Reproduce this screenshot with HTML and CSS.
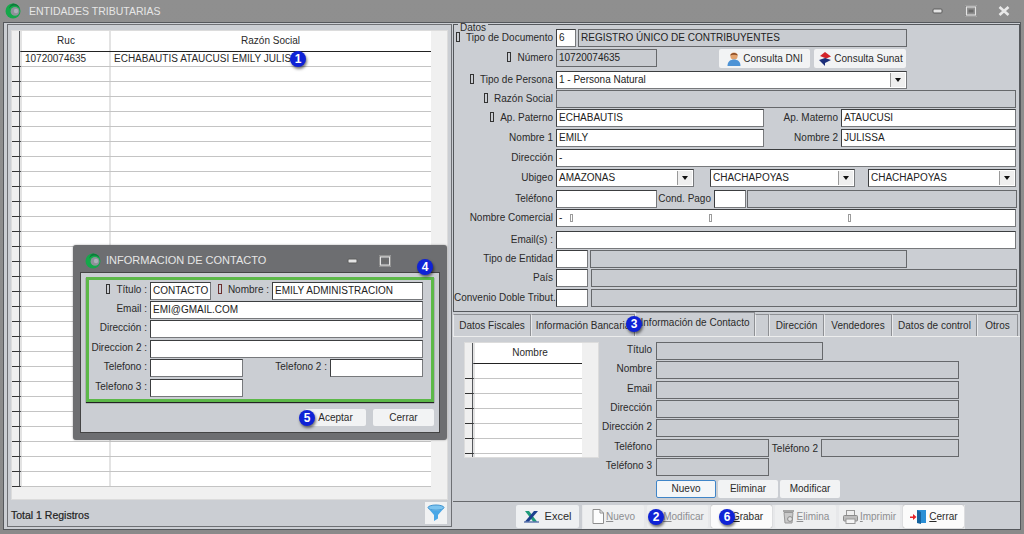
FILE: index.html
```html
<!DOCTYPE html>
<html lang="es">
<head>
<meta charset="utf-8">
<title>Entidades Tributarias</title>
<link rel="stylesheet" href="styles.css">
</head>
<body>
<svg class="defs" width="0" height="0" aria-hidden="true">
  <symbol id="logo" viewBox="0 0 16 16">
    <circle cx="8" cy="8" r="7.5" fill="#14a84a"/>
    <path d="M8 .5A7.5 7.5 0 0 1 15 6 6 6 0 0 0 4 6 7 7 0 0 1 8 .5z" fill="#0c7a3a"/>
    <circle cx="10" cy="8.4" r="4.4" fill="#8d9299"/>
    <circle cx="11" cy="8" r="2.2" fill="#aab0b8"/>
  </symbol>
  <symbol id="min" viewBox="0 0 12 12"><rect x="1" y="4" width="9" height="4" rx="1" fill="#e4e4e4" stroke="#5c5c5c"/></symbol>
  <symbol id="max" viewBox="0 0 12 12"><rect x="1" y="1.5" width="10" height="9" fill="none" stroke="#e4e4e4" stroke-width="2"/><rect x="0.5" y="1" width="11" height="10" fill="none" stroke="#5c5c5c" stroke-width=".6"/><rect x="3.5" y="4.5" width="5" height="3" fill="#6a6a6a"/></symbol>
  <symbol id="close" viewBox="0 0 12 12"><path d="M1.5 2 10.5 10M10.5 2 1.5 10" stroke="#e8e8e8" stroke-width="2.6" fill="none"/></symbol>
</svg>

<div class="window">
  <header class="titlebar">
    <svg class="logo"><use href="#logo"/></svg>
    <span class="title-text">ENTIDADES TRIBUTARIAS</span>
    <div class="controls">
      <svg class="ctl"><use href="#min"/></svg>
      <svg class="ctl"><use href="#max"/></svg>
      <svg class="ctl"><use href="#close"/></svg>
    </div>
  </header>

  <div class="client">
    <section class="list-panel">
      <div class="grid grid-main">
        <div class="grow ghead"><i></i><b>Ruc</b><b>Razón Social</b></div>
        <div class="grow"><i></i><b class="left">10720074635</b><b class="left">ECHABAUTIS ATAUCUSI EMILY JULISSA</b></div>
        <div class="grow"><i></i><b></b><b></b></div><div class="grow"><i></i><b></b><b></b></div><div class="grow"><i></i><b></b><b></b></div>
        <div class="grow"><i></i><b></b><b></b></div><div class="grow"><i></i><b></b><b></b></div><div class="grow"><i></i><b></b><b></b></div>
        <div class="grow"><i></i><b></b><b></b></div><div class="grow"><i></i><b></b><b></b></div><div class="grow"><i></i><b></b><b></b></div>
        <div class="grow"><i></i><b></b><b></b></div><div class="grow"><i></i><b></b><b></b></div><div class="grow"><i></i><b></b><b></b></div>
        <div class="grow"><i></i><b></b><b></b></div><div class="grow"><i></i><b></b><b></b></div><div class="grow"><i></i><b></b><b></b></div>
        <div class="grow"><i></i><b></b><b></b></div><div class="grow"><i></i><b></b><b></b></div><div class="grow"><i></i><b></b><b></b></div>
        <div class="grow"><i></i><b></b><b></b></div><div class="grow"><i></i><b></b><b></b></div><div class="grow"><i></i><b></b><b></b></div>
        <div class="grow"><i></i><b></b><b></b></div><div class="grow"><i></i><b></b><b></b></div><div class="grow"><i></i><b></b><b></b></div>
        <div class="grow"><i></i><b></b><b></b></div><div class="grow"><i></i><b></b><b></b></div><div class="grow"><i></i><b></b><b></b></div>
        <div class="grow"><i></i><b></b><b></b></div>
      </div>
      <div class="list-foot">
        <span class="total">Total 1 Registros</span>
        <button class="filter" aria-label="Filtro">
          <svg width="18" height="18" viewBox="0 0 18 18"><ellipse cx="9" cy="3.6" rx="8" ry="2.6" fill="#7cc4f0" stroke="#3f93cf"/><path d="M1.4 4.5 7 11v6l4-2.4V11l5.6-6.5C13 7 5 7 1.4 4.5z" fill="#4aa7e6"/></svg>
        </button>
      </div>
    </section>

    <div class="right-col">
      <section class="datos">
        <span class="legend">Datos</span>
        <div class="frow r20"><span class="lab"><u class="req"></u>Tipo de Documento</span><span class="fld f20">6</span><span class="fld ro f329 ml2">REGISTRO ÚNICO DE CONTRIBUYENTES</span></div>
        <div class="frow r22"><span class="lab"><u class="req"></u>Número</span><span class="fld ro f101">10720074635</span>
          <button class="btn consult ml62"><svg width="16" height="16" viewBox="0 0 16 16"><circle cx="8" cy="5" r="3.6" fill="#e2a26d"/><path d="M4.2 4.6C4.4 1 11.6 1 11.8 4.6 10 3.4 6 3.4 4.2 4.6z" fill="#8a4a24"/><path d="M1.5 15c0-4.5 3-6.5 6.5-6.5s6.5 2 6.5 6.5z" fill="#4d93d6"/></svg>Consulta DNI</button>
          <button class="btn consult ml4 w92"><svg width="16" height="16" viewBox="0 0 16 16"><path d="M8 1 14 5.5 8 8z" fill="#d3232a"/><path d="M8 8 2 5.5 8 1z" fill="#1c2f7a" opacity="0"/><path d="M2 9 8 7v8z" fill="#1c2f7a"/><path d="M8 7 14 9 8 12z" fill="#1c2f7a"/><path d="M8 1 3 5 8 7z" fill="#d3232a"/></svg>Consulta Sunat</button>
        </div>
        <div class="frow r19"><span class="lab"><u class="req"></u>Tipo de Persona</span><span class="fld sel f351">1 - Persona Natural<em class="arrow"></em></span></div>
        <div class="frow r19"><span class="lab"><u class="req"></u>Razón Social</span><span class="fld ro f460"></span></div>
        <div class="frow r20"><span class="lab"><u class="req"></u>Ap. Paterno</span><span class="fld f208">ECHABAUTIS</span><span class="lab2 w77">Ap. Materno</span><span class="fld f175">ATAUCUSI</span></div>
        <div class="frow r20"><span class="lab">Nombre 1</span><span class="fld f208">EMILY</span><span class="lab2 w77">Nombre 2</span><span class="fld f175">JULISSA</span></div>
        <div class="frow r20"><span class="lab">Dirección</span><span class="fld f460">-</span></div>
        <div class="frow r21"><span class="lab">Ubigeo</span><span class="fld sel f138">AMAZONAS<em class="arrow"></em></span><span class="fld sel f145 ml16">CHACHAPOYAS<em class="arrow"></em></span><span class="fld sel f148 ml13">CHACHAPOYAS<em class="arrow"></em></span></div>
        <div class="frow r19"><span class="lab">Teléfono</span><span class="fld f101"></span><span class="lab2 w57">Cond. Pago</span><span class="fld f32"></span><span class="fld ro f270 ml1"></span></div>
        <div class="frow r22"><span class="lab">Nombre Comercial</span><span class="fld f460 marks">-<u class="mk"></u><u class="mk"></u><u class="mk"></u></span></div>
        <div class="frow r19"><span class="lab">Email(s) :</span><span class="fld f460"></span></div>
        <div class="frow r19"><span class="lab">Tipo de Entidad</span><span class="fld f32"></span><span class="fld ro f317 ml2"></span></div>
        <div class="frow r20"><span class="lab">País</span><span class="fld f32"></span><span class="fld ro f426 ml3"></span></div>
        <div class="frow r20"><span class="lab">Convenio Doble Tribut.</span><span class="fld f32"></span><span class="fld ro f426 ml3"></span></div>
      </section>

      <nav class="tabs">
        <span class="tab t78">Datos Fiscales</span>
        <span class="tab t104">Información Bancaria</span>
        <span class="tab active">Información de Contacto</span>
        <span class="tab t13"></span>
        <span class="tab t55">Dirección</span>
        <span class="tab t68">Vendedores</span>
        <span class="tab t85">Datos de control</span>
        <span class="tab t41">Otros</span>
      </nav>

      <section class="tab-panel">
        <div class="grid grid-small">
          <div class="grow ghead"><i></i><b>Nombre</b></div>
          <div class="grow"><i></i><b></b></div><div class="grow"><i></i><b></b></div><div class="grow"><i></i><b></b></div>
          <div class="grow"><i></i><b></b></div><div class="grow"><i></i><b></b></div><div class="grow"><i></i><b></b></div>
          <div class="grow"><i></i><b></b></div>
        </div>
        <div class="contact">
          <div class="crow c19"><span class="lab3">Título</span><span class="fld ro f167"></span></div>
          <div class="crow c20"><span class="lab3">Nombre</span><span class="fld ro f303"></span></div>
          <div class="crow c19"><span class="lab3">Email</span><span class="fld ro f303"></span></div>
          <div class="crow c19"><span class="lab3">Dirección</span><span class="fld ro f303"></span></div>
          <div class="crow c20"><span class="lab3">Dirección 2</span><span class="fld ro f303"></span></div>
          <div class="crow c19"><span class="lab3">Teléfono</span><span class="fld ro f113"></span><span class="lab2 w52 lowered">Teléfono 2</span><span class="fld ro f138"></span></div>
          <div class="crow c22"><span class="lab3">Teléfono 3</span><span class="fld ro f113"></span></div>
          <div class="contact-btns">
            <button class="btn small focus">Nuevo</button>
            <button class="btn small">Eliminar</button>
            <button class="btn small">Modificar</button>
          </div>
        </div>
      </section>

      <footer class="toolbar">
        <button class="btn tool excel"><svg width="15" height="13" viewBox="0 0 15 13"><path d="M1 1h4l8 10.5H9z" fill="#1f9a7a"/><path d="M14 1h-4L1 11.5h4z" fill="#1b3f8e"/><path d="M0 12h15" stroke="#1b3f8e"/></svg><span class="excel-t">Excel</span></button>
        <div class="toolgroup">
          <button class="btn tool dis"><svg width="12" height="15" viewBox="0 0 12 15"><path d="M1 .5h7l3.5 3.5v10.5H1z" fill="#fdfdfd" stroke="#8e8e8e"/><path d="M8 .5V4h3.5" fill="none" stroke="#8e8e8e"/></svg><span><u>N</u>uevo</span></button>
          <button class="btn tool dis"><span class="after-badge"><u>M</u>odificar</span></button>
          <button class="btn tool on"><span class="after-badge"><u>G</u>rabar</span></button>
          <button class="btn tool dis"><svg width="13" height="15" viewBox="0 0 13 15"><rect x="1" y="1" width="11" height="2" fill="#a5a5a5"/><path d="M2 3.5h9L10 14H3z" fill="#c9c9c9" stroke="#989898"/><circle cx="8" cy="10" r="2.4" fill="#e2e2e2" stroke="#8a8a8a"/></svg><span><u>E</u>limina</span></button>
          <button class="btn tool dis"><svg width="15" height="14" viewBox="0 0 15 14"><rect x="3.5" y=".5" width="8" height="5" fill="#eee" stroke="#979797"/><rect x=".5" y="5.5" width="14" height="5.5" rx="1" fill="#bdbdbd" stroke="#8b8b8b"/><rect x="3" y="9" width="9" height="4.5" fill="#f4f4f4" stroke="#979797"/></svg><span><u>I</u>mprimir</span></button>
          <button class="btn tool on"><svg width="18" height="15" viewBox="0 0 18 15"><path d="M8 1h9v13H8z" fill="#2a8fd6"/><path d="M8 1l4 2v12l-4-1z" fill="#15639f"/><path d="M1 7.5h3V5l3.5 3L4 11V9H1z" fill="#e5232a"/></svg><span><u>C</u>errar</span></button>
        </div>
      </footer>
    </div>
  </div>
</div>

<div class="dialog">
  <header class="dlg-title">
    <svg class="logo"><use href="#logo"/></svg>
    <span class="dlg-text">INFORMACION DE CONTACTO</span>
    <div class="dlg-controls">
      <svg class="ctl"><use href="#min"/></svg>
      <svg class="ctl"><use href="#max"/></svg>
    </div>
  </header>
  <div class="dlg-body">
    <div class="green">
      <div class="drow"><span class="dlab"><u class="req"></u>Título :</span><span class="fld f61">CONTACTO</span><span class="dlab2"><u class="req red"></u>Nombre :</span><span class="fld f151">EMILY ADMINISTRACION</span></div>
      <div class="drow"><span class="dlab">Email :</span><span class="fld f273">EMI@GMAIL.COM</span></div>
      <div class="drow d20"><span class="dlab">Dirección :</span><span class="fld f273"></span></div>
      <div class="drow"><span class="dlab">Direccion 2 :</span><span class="fld f273"></span></div>
      <div class="drow d20"><span class="dlab">Telefono :</span><span class="fld f93"></span><span class="dlab3">Telefono 2 :</span><span class="fld f93"></span></div>
      <div class="drow"><span class="dlab">Telefono 3 :</span><span class="fld f93"></span></div>
    </div>
    <div class="dlg-btns">
      <button class="btn dbtn">Aceptar</button>
      <button class="btn dbtn">Cerrar</button>
    </div>
  </div>
</div>

<span class="badge b1">1</span>
<span class="badge b2">2</span>
<span class="badge b3">3</span>
<span class="badge b4">4</span>
<span class="badge b5">5</span>
<span class="badge b6">6</span>
</body>
</html>
```
FILE: styles.css
```css
* { box-sizing: border-box; }
html, body { margin: 0; padding: 0; }
body {
  width: 1024px; height: 534px; overflow: hidden; position: relative;
  font: 10px/1 "Liberation Sans", Arial, sans-serif; color: #2a2a2a;
  background: #8b8b8b;
}
.defs { position: absolute; }
u { text-decoration: underline; }

/* window */
.window { height: 534px; padding: 0 3px 4px; display: flex; flex-direction: column;
  background: linear-gradient(#8f8f8f, #8a8a8a); }
.titlebar { height: 22px; flex: none; display: flex; align-items: center; padding-left: 2px; }
.logo { width: 16px; height: 16px; flex: none; }
.title-text { margin-left: 8px; font-size: 10.5px; color: #e6e6e6; }
.controls { margin-left: auto; display: flex; gap: 21px; padding-right: 11px; }
.ctl { width: 12px; height: 12px; display: block; }

.client { flex: 1; min-height: 0; display: flex; background: #cbced3; border: 1px solid #55585c; padding: 1px 1px 2px 3px; }

/* list */
.list-panel { width: 445px; flex: none; border: 1px solid #6e7074; padding: 5px 3px 0; display: flex; flex-direction: column; }
.grid { background: #f0f0f0; border: 1px solid #dcdcdc; overflow: hidden; flex: none; }
.grid-main { height: 470px; width: 437px; }
.grow { display: grid; height: 15px; border-bottom: 1px solid #c4c4c4; background: #fff; margin-right: 16px; }
.grid-main .grow { grid-template-columns: 9px 89px 320px; }
.grow i { background: #efefef; border-right: 2px solid #55585c; border-bottom: 1px solid #333; margin-bottom: -1px; }
.grow b { font-weight: 400; border-left: 2px solid #e3e3e3; line-height: 14px; text-align: center; margin-left: -1px; color: #2a2a2a; }
.grow b.left { text-align: left; padding-left: 3px; }
.ghead { height: 21px; border-bottom: 1px solid #222; }
.ghead b { line-height: 20px; }
.ghead i { border-bottom: 0; }
.list-foot { flex: 1; display: flex; align-items: flex-start; justify-content: space-between; padding-top: 2px; padding-right: 1px; }
.total { font-weight: 400; font-size: 10.5px; margin-top: 8px; color: #222; -webkit-text-stroke: .2px #222; }
.filter { width: 22px; height: 22px; background: #f1f2f3; border: 0; padding: 2px; display: flex; align-items: center; justify-content: center; }

/* right */
.right-col { flex: 1; margin-left: 1px; display: flex; flex-direction: column; min-width: 0; }
.datos { height: 288px; border: 1px solid #55585c; padding-top: 4px; position: relative; flex: none; margin-right: -1px; }
.legend { position: absolute; left: 4px; top: -2px; background: #cbced3; padding: 0 2px; line-height: 9px; }
.frow { display: flex; align-items: flex-start; }
.r19 { height: 19px; } .r20 { height: 20px; } .r21 { height: 21px; } .r22 { height: 22px; }
.lab { width: 99px; margin-right: 3px; text-align: right; line-height: 17px; white-space: nowrap; flex: none; }
.lab2 { text-align: right; line-height: 17px; white-space: nowrap; flex: none; padding-right: 3px; }
.w77 { width: 77px; } .w57 { width: 57px; } .w52 { width: 52px; }
.req { display: inline-block; width: 4px; height: 10px; border: 1px solid #333; margin-right: 6px; vertical-align: -1px; }
.req.red { border-color: #6b2f2f; }

.fld { display: block; height: 18px; flex: none; background: #fff; border: 1px solid #3c3e40; border-right-color: #77797c; border-bottom-color: #77797c;
  padding: 0 2px; line-height: 16px; white-space: nowrap; overflow: hidden; position: relative; color: #222; }
.fld.ro { background: #c9ccd1; border: 1px solid #66686b; }
.sel { padding-right: 18px; }
.arrow { position: absolute; right: 1px; top: 1px; width: 15px; height: 14px; background: #efefef; border-left: 1px solid #9a9a9a; }
.arrow::after { content: ""; position: absolute; left: 4px; top: 5px; border: 3px solid transparent; border-top: 4px solid #111; border-bottom: 0; }
.marks { display: flex; }
.mk { display: block; width: 3px; height: 8px; margin: 4px 0 0 136px; border: 1px solid #9b9b9b; }
.mk:first-of-type { margin-left: 8px; }
.f20 { width: 20px; } .f32 { width: 32px; } .f61 { width: 61px; } .f93 { width: 93px; } .f101 { width: 101px; }
.f113 { width: 113px; } .f138 { width: 138px; } .f145 { width: 145px; } .f148 { width: 148px; } .f151 { width: 151px; }
.f167 { width: 167px; } .f175 { width: 175px; } .f208 { width: 208px; } .f270 { width: 270px; } .f273 { width: 273px; }
.f303 { width: 303px; } .f317 { width: 317px; } .f329 { width: 329px; } .f351 { width: 351px; } .f426 { width: 426px; } .f460 { width: 460px; }
.ml1 { margin-left: 1px; } .ml2 { margin-left: 2px; } .ml3 { margin-left: 3px; } .ml4 { margin-left: 4px; }
.ml13 { margin-left: 13px; } .ml16 { margin-left: 16px; } .ml62 { margin-left: 62px; }

.btn { font: inherit; color: #2a2a2a; background: #f2f3f4; border: 0; border-radius: 2px; padding: 0; display: inline-flex; align-items: center; justify-content: center; flex: none; }
.consult { width: 91px; height: 19px; gap: 1px; }
.w92 { width: 92px; }

/* tabs */
.tabs { display: flex; height: 24px; flex: none; padding-top: 2px; margin-top: 0; align-items: flex-end; }
.tab { height: 22px; border: 1px solid #8e9094; border-bottom: 0; border-left-color: #e9eaec; background: #cbced3; line-height: 21px; text-align: center; white-space: nowrap; flex: none; }
.t78 { width: 78px; } .t104 { width: 104px; } .t13 { width: 14px; } .t55 { width: 55px; } .t68 { width: 68px; } .t85 { width: 85px; } .t41 { width: 41px; }
.tab.active { width: 120px; height: 24px; line-height: 20px; }
.tab-panel { height: 166px; flex: none; border-top: 1px solid #eceded; border-bottom: 1px solid #66686b; display: flex; padding-top: 5px; margin-right: -1px; }
.grid-small { width: 135px; height: 116px; margin-left: 11px; }
.grid-small .grow { grid-template-columns: 9px 111px; }
.contact { margin-left: 0; }
.crow { display: flex; align-items: flex-start; }
.c19 { height: 19px; } .c20 { height: 20px; } .c22 { height: 22px; }
.crow .fld { height: 18px; }
.lab3 { width: 53px; margin-right: 4px; text-align: right; line-height: 16px; white-space: nowrap; flex: none; }
.lowered { line-height: 20px; }
.contact-btns { display: flex; gap: 2px; margin-left: 57px; }
.small { width: 60px; height: 18px; box-shadow: 0 0 0 0 transparent; }
.focus { border: 1px solid #3f85c8; background: #f4f6f8; }

/* toolbar */
.toolbar { height: 24px; margin-top: 3px; display: flex; align-items: stretch; padding-left: 63px; flex: none; }
.tool { width: 61px; height: 23px; gap: 2px; }
.excel { width: 63px; background: #eef0f2; font-size: 11px; gap: 6px; }
.excel-t { font-size: 11px; }
.toolgroup { display: flex; gap: 3px; margin-left: 3px; padding: 0 1px; background: #e7e8ea; }
.dis { color: #8d8e90; background: #eeeff0; }
.on { background: #fbfbfb; box-shadow: 0 0 1px #7a7a7a; color: #2a2a2a; }
.after-badge { padding-left: 12px; }

/* dialog */
.dialog { position: absolute; left: 73px; top: 245px; width: 374px; height: 195px; background: #6d6e71; border-radius: 3px; padding: 0 7px 7px; display: flex; flex-direction: column; box-shadow: 0 0 2px rgba(0,0,0,.4); }
.dlg-title { height: 27px; flex: none; display: flex; align-items: center; padding-left: 5px; padding-top: 4px; }
.dlg-text { margin-left: 5px; font-size: 11px; color: #e6e6e6; }
.dlg-controls { margin-left: auto; display: flex; gap: 20px; padding-right: 49px; }
.dlg-body { flex: 1; background: #cbced3; border: 1px solid #444; padding: 4px 5px 0; }
.green { height: 125px; border: 3px solid #5cb848; padding: 2px 10px 0 0; box-shadow: 0 1px 1px #222; }
.drow { display: flex; height: 19px; }
.d20 { height: 20px; }
.dlab { width: 58px; margin-right: 3px; text-align: right; line-height: 16px; white-space: nowrap; flex: none; }
.dlab2 { width: 61px; margin-right: 0; padding-right: 3px; text-align: right; line-height: 16px; white-space: nowrap; flex: none; }
.dlab3 { width: 87px; padding-right: 3px; text-align: right; line-height: 16px; white-space: nowrap; flex: none; }
.dlg-btns { display: flex; justify-content: flex-end; gap: 7px; margin-top: 7px; }
.dbtn { width: 61px; height: 17px; }

/* badges */
.badge { position: absolute; width: 16px; height: 16px; border-radius: 50%; background: #0f22d6; color: #fff; font-size: 12px; font-weight: 700; line-height: 16px; text-align: center; box-shadow: 1px 2px 3px rgba(0,0,0,.55); }
.b1 { left: 290px; top: 51px; }
.b2 { left: 648px; top: 509px; }
.b3 { left: 626px; top: 316px; }
.b4 { left: 417px; top: 259px; }
.b5 { left: 299px; top: 410px; }
.b6 { left: 719px; top: 509px; }
```
